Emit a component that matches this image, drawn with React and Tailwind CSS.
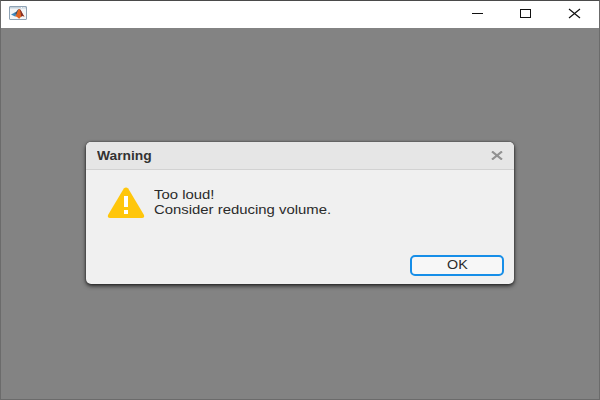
function TitleBar() {
  return (
    <header className="flex h-[27px] shrink-0 items-center bg-white pl-2">
      <svg width="18" height="15" viewBox="0 0 18 15" className="-mt-0.5">
        <rect x="0.5" y="0.5" width="17" height="13" rx="0.5" fill="#f4f6f8" stroke="#8fa3b5" />
        <path d="M1 1h16v1.500H1z" fill="#c3d0da" />
        <path d="M12 1.600h1M14.500 1.600h1" stroke="#fff" />
        <path d="M2 8.600 6 6.500l2 2-2 2z" fill="#3d87bd" />
        <path d="M5.500 6.800c2.500-.4 2.500-3.500 4.500-3.800L8 9z" fill="#35506b" />
        <path d="M6 10.500C8 9 8.600 3 10.200 3c1.600 0 3 4.800 5.300 7.600-2.400-1.600-3.500.2-5.300 2.200-1-.4-2-2.700-4.200-2.300z" fill="#e06422" />
        <path d="M10.500 3c1.400.5 2.700 4.500 5 7.600-1.700-1.100-2.600-.8-3.600.1.400-2.900-.6-5.300-1.400-7.700z" fill="#84302a" />
      </svg>
      <svg width="120" height="26" viewBox="0 0 120 26" className="-mt-px ml-auto mr-2.5" fill="none" stroke="#111">
        <path d="M3 12.500h11" />
        <rect x="51.500" y="8.500" width="10" height="8" />
        <path d="M100 8l11 9M111 8l-11 9" strokeWidth="1.200" />
      </svg>
    </header>
  );
}

function WarningDialog() {
  return (
    <section className="flex h-[142px] w-[428px] flex-col overflow-hidden rounded-[5px] bg-[#f0f0f0] shadow-[0_2px_4px_0_rgba(0,0,0,0.7),0_0_2px_0_rgba(0,0,0,0.6)]">
      <div className="flex h-7 shrink-0 items-center justify-between border-b border-[#d2d2d2] bg-[#e6e6e6] px-[11px]">
        <h1 className="origin-left scale-x-[1.15] text-[12px] font-bold leading-[14px] text-[#333]">Warning</h1>
        <svg width="12" height="9" viewBox="0 0 12 9" stroke="#929292" strokeWidth="2.200">
          <path d="M1 .5l10 8M11 .5L1 8.500" />
        </svg>
      </div>
      <div className="flex flex-1 gap-[9px] pl-[21px] pt-4">
        <svg width="38" height="33" viewBox="0 0 38 33" className="shrink-0">
          <path d="M16.800 2.500Q19 .5 21.200 2.500L37 29Q37.800 32 35 32H3Q.2 32 1 29Z" fill="#ffc60b" />
          <path d="M17 10h4v11h-4zM17 24h4v4h-4z" fill="#fff" />
        </svg>
        <p className="origin-left scale-x-[1.145] self-start whitespace-nowrap pt-px text-[13px] leading-[15px] text-[#2b2b2b]">
          Too loud!
          <br />
          Consider reducing volume.
        </p>
      </div>
      <div className="flex justify-end pb-2 pr-2.5">
        <button className="flex h-[21px] w-[94px] items-center justify-center rounded-[5px] border-2 border-[#168ee8] bg-[#f7f7f7] pb-0.5 text-[13px] leading-[15px] text-[#2b2b2b]">
          <span className="scale-x-[1.1]">OK</span>
        </button>
      </div>
    </section>
  );
}

export default function App() {
  return (
    <div className="flex h-[400px] w-[600px] flex-col border border-[#6b6b6b] border-t-[#4a4a4a] bg-[#838383] font-['Liberation_Sans',Arial,sans-serif]">
      <TitleBar />
      <main className="flex justify-center pt-[114px]">
        <WarningDialog />
      </main>
    </div>
  );
}
